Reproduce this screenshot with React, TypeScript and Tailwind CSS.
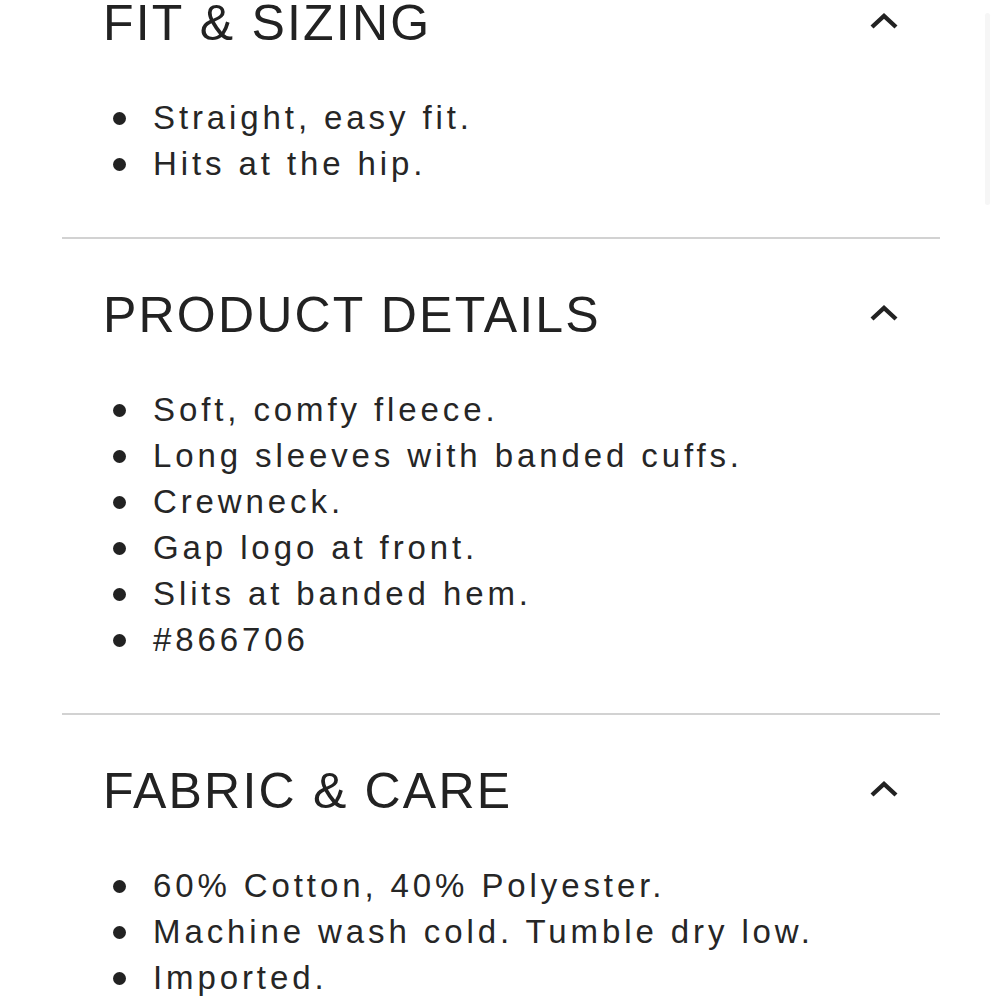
// Product info accordion (all sections expanded)

const SECTIONS: { title: string; items: string[] }[] = [
  { title: "FIT & SIZING", items: ["Straight, easy fit.", "Hits at the hip."] },
  {
    title: "PRODUCT DETAILS",
    items: [
      "Soft, comfy fleece.",
      "Long sleeves with banded cuffs.",
      "Crewneck.",
      "Gap logo at front.",
      "Slits at banded hem.",
      "#866706",
    ],
  },
  {
    title: "FABRIC & CARE",
    items: ["60% Cotton, 40% Polyester.", "Machine wash cold. Tumble dry low.", "Imported."],
  },
];

function ChevronUp() {
  return (
    <svg width="30" height="18" viewBox="0 0 30 18" className="shrink-0 -mt-[4px]">
      <polyline points="3,15 15,4 27,15" fill="none" stroke="#222" strokeWidth="4.4" strokeLinejoin="miter" />
    </svg>
  );
}

function Section({ title, items, first }: { title: string; items: string[]; first?: boolean }) {
  return (
    <div className={["pt-[46px] pb-[50px] border-b-2 border-[#d2d2d2]", first ? "-mt-[53px]" : ""].join(" ")}>
      <div className="px-[41px]">
        <div className="flex items-center justify-between h-[60px]">
          <h2 className="text-[50px] leading-[60px] tracking-[2.2px] text-[#222]">{title}</h2>
          <ChevronUp />
        </div>
        <ul className="mt-[42px] flex flex-col">
          {items.map((it) => (
            <li key={it} className="flex items-center h-[46px]">
              <span className="ml-[10px] w-[13px] h-[13px] rounded-full bg-[#222] shrink-0" />
              <span className="ml-[27px] text-[33px] leading-[46px] tracking-[3.9px] text-[#262626] whitespace-nowrap">
                {it}
              </span>
            </li>
          ))}
        </ul>
      </div>
    </div>
  );
}

export default function App() {
  return (
    <div
      className="relative w-[1000px] h-[1000px] overflow-hidden bg-white"
      style={{ fontFamily: '"Liberation Sans", Arial, sans-serif' }}
    >
      <div className="ml-[62px] w-[878px]">
        {SECTIONS.map((s, i) => (
          <Section key={s.title} title={s.title} items={s.items} first={i === 0} />
        ))}
      </div>
      {/* faint scrollbar thumb */}
      <div className="absolute left-[985px] top-[13px] w-[5px] h-[192px] rounded-full bg-[#f6f6f6]" />
    </div>
  );
}
